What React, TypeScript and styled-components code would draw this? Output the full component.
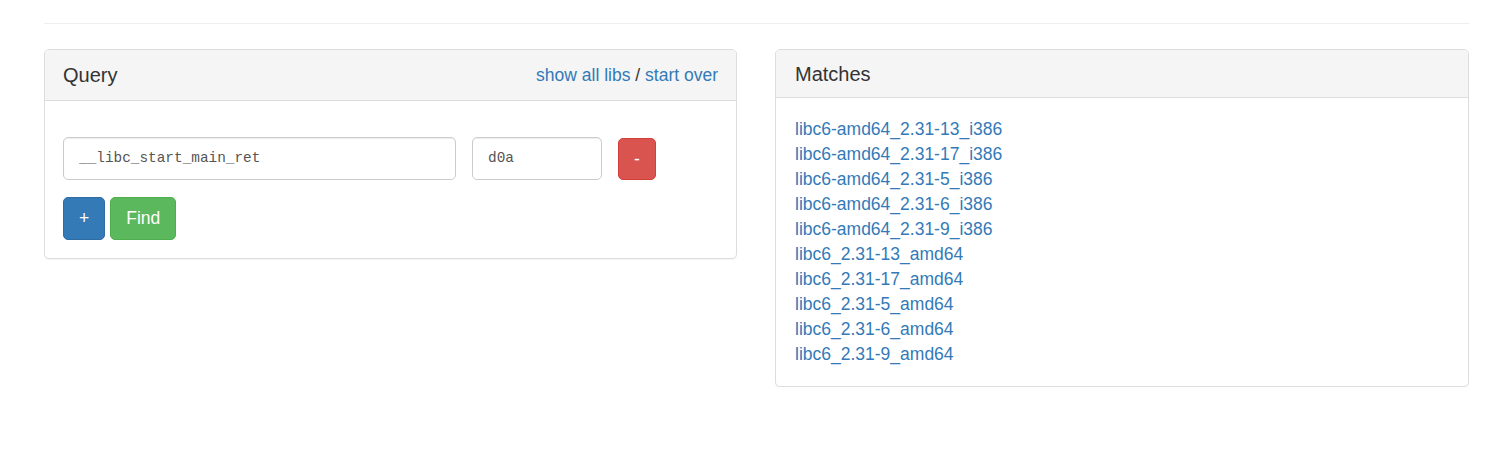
import React from "react";
import styled, { createGlobalStyle } from "styled-components";

const GlobalStyle = createGlobalStyle`
  html, body { margin: 0; padding: 0; background: #fff; }
  body {
    font-family: "Liberation Sans", Arial, Helvetica, sans-serif;
    font-size: 17.5px;
    line-height: 25px;
    color: #333;
  }
  * { box-sizing: border-box; }
`;

const Page = styled.div`
  padding: 23px 34px 0 44px;
`;

const Rule = styled.hr`
  margin: 0 0 25px 0;
  border: 0;
  border-top: 1px solid #eee;
`;

const Columns = styled.div`
  display: grid;
  grid-template-columns: 693px 694px;
  column-gap: 38px;
  align-items: start;
`;

const Panel = styled.div`
  background: #fff;
  border: 1px solid #ddd;
  border-radius: 5px;
  box-shadow: 0 1px 1px rgba(0, 0, 0, 0.05);
`;

const PanelHeading = styled.div<{ $px: number }>`
  display: flex;
  align-items: center;
  justify-content: space-between;
  padding: 12.5px ${(p) => p.$px}px;
  background: #f5f5f5;
  border-bottom: 1px solid #ddd;
  border-radius: 4px 4px 0 0;
  color: #333;
`;

const PanelTitle = styled.h3`
  margin: 0;
  font-size: 20px;
  font-weight: 500;
  line-height: 22px;
  color: inherit;
`;

const HeadingLinks = styled.div`
  line-height: 25px;
`;

const Link = styled.a`
  color: #337ab7;
  text-decoration: none;
  cursor: pointer;
`;

const PanelBody = styled.div<{ $px: number; $pb: number }>`
  padding: 18.75px ${(p) => p.$px}px ${(p) => p.$pb}px;
`;

const QueryRow = styled.div`
  display: flex;
  align-items: flex-start;
  margin: 17px 0 17px;
`;

const TextInput = styled.input<{ $w: number; $mr: number }>`
  width: ${(p) => p.$w}px;
  margin-right: ${(p) => p.$mr}px;
  height: 43px;
  padding: 0 15px;
  font-family: "Liberation Mono", "DejaVu Sans Mono", monospace;
  font-size: 14.4px;
  line-height: 22px;
  color: #555;
  background: #fff;
  border: 1px solid #ccc;
  border-radius: 5px;
  box-shadow: inset 0 1px 1px rgba(0, 0, 0, 0.075);
  outline: none;
`;

const variants = {
  danger: { bg: "#d9534f", border: "#d43f3a" },
  primary: { bg: "#337ab7", border: "#2e6da4" },
  success: { bg: "#5cb85c", border: "#4cae4c" },
};

const Button = styled.button<{ $v: keyof typeof variants; $offset?: number }>`
  display: inline-block;
  height: 42.5px;
  padding: 7.5px 15px;
  margin-top: ${(p) => p.$offset ?? 0}px;
  font-family: "Liberation Sans", Arial, Helvetica, sans-serif;
  font-size: 17.5px;
  line-height: 25px;
  color: #fff;
  background: ${(p) => variants[p.$v].bg};
  border: 1px solid ${(p) => variants[p.$v].border};
  border-radius: 5px;
  cursor: pointer;
`;

const ButtonRow = styled.div`
  display: flex;
  gap: 5px;
`;

const MatchList = styled.div`
  display: flex;
  flex-direction: column;
`;

const matches = [
  "libc6-amd64_2.31-13_i386",
  "libc6-amd64_2.31-17_i386",
  "libc6-amd64_2.31-5_i386",
  "libc6-amd64_2.31-6_i386",
  "libc6-amd64_2.31-9_i386",
  "libc6_2.31-13_amd64",
  "libc6_2.31-17_amd64",
  "libc6_2.31-5_amd64",
  "libc6_2.31-6_amd64",
  "libc6_2.31-9_amd64",
];

export default function App() {
  return (
    <>
      <GlobalStyle />
      <Page>
        <Rule />
        <Columns>
          <Panel>
            <PanelHeading $px={18}>
              <PanelTitle>Query</PanelTitle>
              <HeadingLinks>
                <Link>show all libs</Link> / <Link>start over</Link>
              </HeadingLinks>
            </PanelHeading>
            <PanelBody $px={18} $pb={18}>
              <QueryRow>
                <TextInput $w={393} $mr={16} defaultValue="__libc_start_main_ret" />
                <TextInput $w={130} $mr={16} defaultValue="d0a" />
                <Button $v="danger" $offset={1}>-</Button>
              </QueryRow>
              <ButtonRow>
                <Button $v="primary">+</Button>
                <Button $v="success">Find</Button>
              </ButtonRow>
            </PanelBody>
          </Panel>
          <Panel>
            <PanelHeading $px={19}>
              <PanelTitle>Matches</PanelTitle>
            </PanelHeading>
            <PanelBody $px={19} $pb={18.75}>
              <MatchList>
                {matches.map((m) => (
                  <Link key={m}>{m}</Link>
                ))}
              </MatchList>
            </PanelBody>
          </Panel>
        </Columns>
      </Page>
    </>
  );
}
